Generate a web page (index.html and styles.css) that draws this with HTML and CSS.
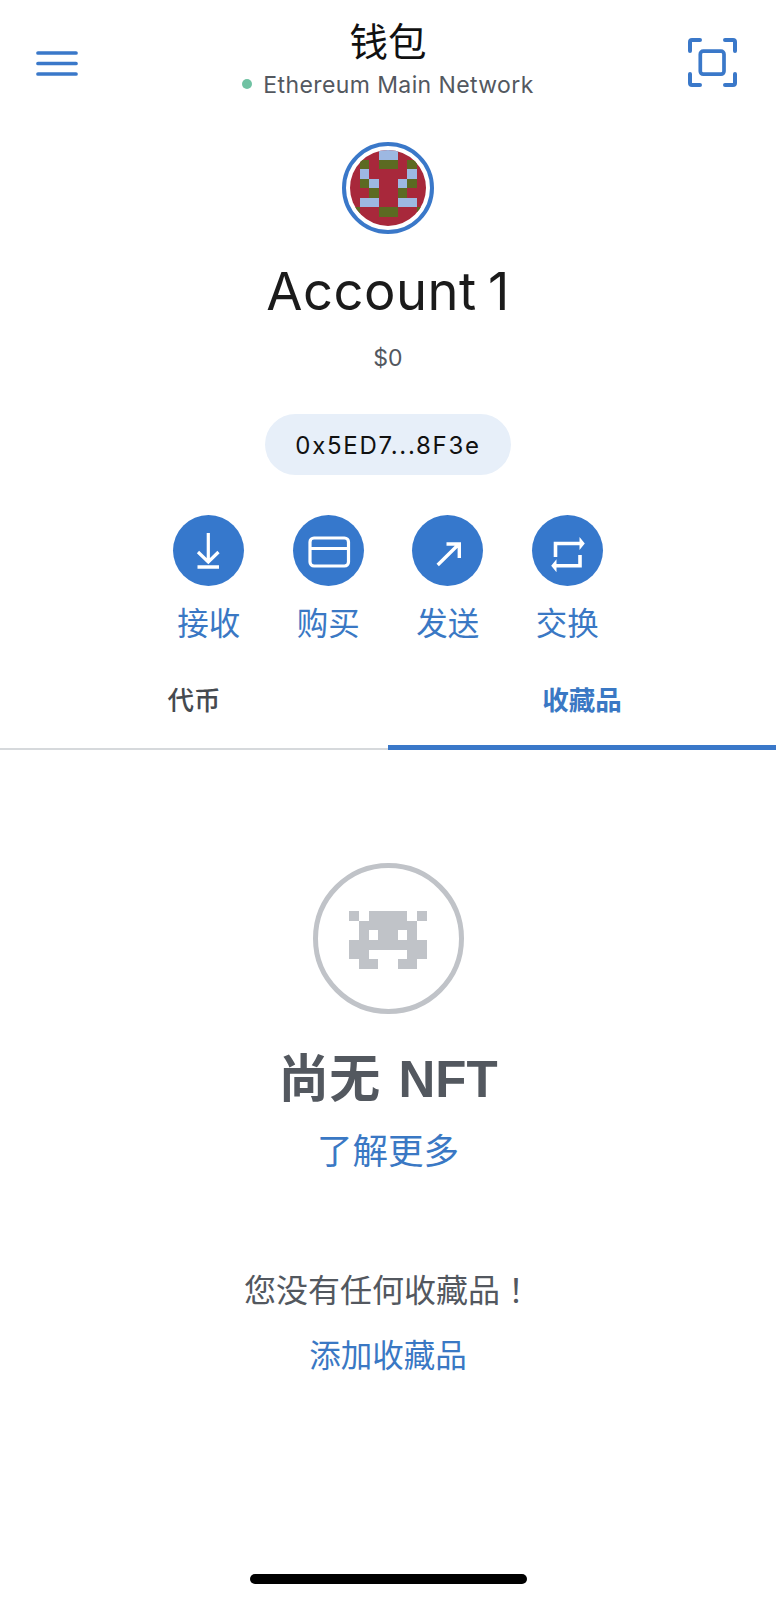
FILE: index.html
```html
<!DOCTYPE html>
<html lang="zh-CN">

<head>
    <meta charset="UTF-8">
    <meta name="viewport" content="width=device-width, initial-scale=1.0">
    <link rel="stylesheet" href="styles.css">
    <title>钱包</title>
</head>

<body>
    <div class="page">
        <div class="topBar">
            <svg class="menuIcon" width="42" height="25" viewBox="0 0 42 25">
                <path d="M2 2H40M2 12.5H40M2 23H40" stroke="#3a78c9" stroke-width="3.7" stroke-linecap="round" fill="none" />
            </svg>
            <div class="topTitle">
                <p class="walletName">钱包</p>
                <p class="networkName"><span class="networkDot"></span>Ethereum Main Network</p>
            </div>
            <svg class="scanIcon" width="49" height="49" viewBox="0 0 49 49" fill="none" stroke="#3a78c9" stroke-width="4" stroke-linecap="round" stroke-linejoin="round">
                <path d="M2 13V4Q2 2 4 2H12M37 2H45Q47 2 47 4V13M47 36V45Q47 47 45 47H37M12 47H4Q2 47 2 45V36" />
                <rect x="12.3" y="13.2" width="23.7" height="23" rx="3" stroke-width="3.7" />
            </svg>
        </div>

        <div class="account">
            <div class="avatar">
                <svg width="76" height="76" viewBox="0 0 8 8" shape-rendering="crispEdges">
                    <rect width="8" height="8" fill="#a8283b" />
                    <g fill="#9db8e2">
                        <rect x="3" y="0" width="2" height="1" />
                        <rect x="1" y="2" width="1" height="1" />
                        <rect x="6" y="2" width="1" height="1" />
                        <rect x="2" y="3" width="1" height="1" />
                        <rect x="5" y="3" width="1" height="1" />
                        <rect x="1" y="5" width="2" height="1" />
                        <rect x="5" y="5" width="2" height="1" />
                    </g>
                    <g fill="#5c6a22">
                        <rect x="1" y="1" width="1" height="1" />
                        <rect x="3" y="1" width="2" height="1" />
                        <rect x="6" y="1" width="1" height="1" />
                        <rect x="1" y="3" width="1" height="1" />
                        <rect x="6" y="3" width="1" height="1" />
                        <rect x="2" y="4" width="1" height="1" />
                        <rect x="5" y="4" width="1" height="1" />
                        <rect x="3" y="6" width="2" height="1" />
                        <rect x="0" y="6" width="1" height="1" />
                        <rect x="7" y="6" width="1" height="1" />
                    </g>
                </svg>
            </div>
            <h1 class="accountName">Account 1</h1>
            <p class="balance">$0</p>
            <div class="addressPill">0x5ED7...8F3e</div>
        </div>

        <div class="actions">
            <div class="action">
                <span class="actionCircle">
                    <svg width="71" height="71" viewBox="0 0 71 71" fill="none" stroke="#fff" stroke-width="3.2">
                        <path d="M35.3 18V47M25 37L35.3 47L45.5 37" />
                        <path d="M24.5 52H46" stroke-width="3.5" />
                    </svg>
                </span>
                <span class="actionLabel">接收</span>
            </div>
            <div class="action">
                <span class="actionCircle">
                    <svg width="71" height="71" viewBox="0 0 71 71" fill="none" stroke="#fff" stroke-width="3.2">
                        <rect x="17" y="23" width="38.5" height="28" rx="4" />
                        <path d="M17 33.5H55.5" />
                    </svg>
                </span>
                <span class="actionLabel">购买</span>
            </div>
            <div class="action">
                <span class="actionCircle">
                    <svg width="71" height="71" viewBox="0 0 71 71" fill="none" stroke="#fff" stroke-width="3.4">
                        <path d="M25.7 50L47 29M34.5 29H47.3V43" />
                    </svg>
                </span>
                <span class="actionLabel">发送</span>
            </div>
            <div class="action">
                <span class="actionCircle">
                    <svg width="71" height="71" viewBox="0 0 71 71" fill="none" stroke="#fff" stroke-width="3.6">
                        <path d="M23.5 42V28.5H48M48 40V50.7H24" />
                        <path d="M47.5 22L52.8 28.5L47.5 35ZM24.5 44.2L19.2 50.7L24.5 57.2Z" fill="#fff" stroke="none" />
                    </svg>
                </span>
                <span class="actionLabel">交换</span>
            </div>
        </div>

        <div class="tabs">
            <div class="tab">代币</div>
            <div class="tab tabActive">收藏品</div>
        </div>

        <div class="emptyState">
            <div class="nftCircle">
                <svg width="78" height="58" viewBox="0 0 8 6" fill="#c0c3c8" shape-rendering="crispEdges">
                    <path d="M0 0H1V1H0ZM2 0H6V1H2ZM7 0H8V1H7Z" />
                    <path d="M1 1H7V2H1Z" />
                    <path d="M1 2H2V3H1ZM3 2H5V3H3ZM6 2H7V3H6Z" />
                    <path d="M0 3H8V4H0Z" />
                    <path d="M0 4H2V5H0ZM6 4H8V5H6Z" />
                    <path d="M1 5H3V6H1ZM5 5H7V6H5Z" />
                </svg>
            </div>
            <h2 class="emptyTitle">尚无 NFT</h2>
            <a class="learnMore">了解更多</a>
            <p class="emptyText">您没有任何收藏品<span class="fullStop">！</span></p>
            <a class="addLink">添加收藏品</a>
        </div>

        <div class="homeBar"></div>
    </div>
</body>

</html>
```

FILE: styles.css
```css
* {
    box-sizing: border-box;
}

body {
    background-color: #fff;
    margin: 0;
    padding: 0;
    font-family: "Inter", "Noto Sans CJK SC", sans-serif;
}

p,
h1,
h2 {
    margin: 0;
    font-weight: normal;
}

.page {
    display: flex;
    flex-direction: column;
    height: 1600px;
}

.topBar {
    display: grid;
    grid-template-columns: 1fr auto 1fr;
    height: 142px;
    padding: 0 36px;
}

.menuIcon {
    margin-top: 51px;
}

.scanIcon {
    justify-self: end;
    margin-top: 38px;
    margin-right: 3px;
}

.topTitle {
    display: flex;
    flex-direction: column;
    align-items: center;
    padding-top: 14px;
}

.walletName {
    font-size: 38.5px;
    line-height: 57px;
    color: #111;
}

.networkName {
    display: flex;
    align-items: center;
    font-size: 23px;
    line-height: 28px;
    letter-spacing: 0.4px;
    color: #53585f;
}

.networkDot {
    width: 10px;
    height: 10px;
    margin-right: 11px;
    margin-bottom: 3px;
    border-radius: 50%;
    background-color: #70c2a3;
}

.account {
    display: flex;
    flex-direction: column;
    align-items: center;
}

.avatar {
    display: flex;
    align-items: center;
    justify-content: center;
    width: 92px;
    height: 92px;
    border: 4px solid #3a78c9;
    border-radius: 50%;
}

.avatar svg {
    border-radius: 50%;
}

.accountName {
    margin-top: 23px;
    font-size: 52.5px;
    font-weight: 400;
    line-height: 68px;
    letter-spacing: 0.5px;
    word-spacing: -4px;
    color: #1b1b1b;
}

.balance {
    margin-top: 18px;
    font-size: 23px;
    line-height: 30px;
    color: #53585f;
}

.addressPill {
    width: 246px;
    height: 61px;
    margin-top: 41px;
    border-radius: 31px;
    background-color: #e7eff9;
    font-size: 24px;
    line-height: 63px;
    letter-spacing: 1.7px;
    text-align: center;
    color: #111;
}

.actions {
    display: flex;
    justify-content: center;
    gap: 48.5px;
    margin-top: 40px;
}

.action {
    display: flex;
    flex-direction: column;
    align-items: center;
    width: 71px;
}

.actionCircle {
    width: 71px;
    height: 71px;
    border-radius: 50%;
    background-color: #3678cc;
}

.actionCircle svg {
    display: block;
}

.actionLabel {
    margin-top: 16px;
    font-size: 31.5px;
    line-height: 44px;
    color: #3a78c4;
}

.tabs {
    display: flex;
    height: 98px;
    margin-top: 6px;
}

.tab {
    flex: 1;
    padding-top: 29px;
    border-bottom: 2px solid #d6d9dc;
    font-size: 26.5px;
    font-weight: 500;
    line-height: 38px;
    text-align: center;
    color: #454a50;
}

.tabActive {
    border-bottom: 5px solid #3a78c9;
    color: #3a78c4;
    font-weight: 700;
}

.emptyState {
    display: flex;
    flex-direction: column;
    align-items: center;
}

.nftCircle {
    display: flex;
    align-items: center;
    justify-content: center;
    width: 151px;
    height: 151px;
    margin-top: 113px;
    padding-top: 2px;
    border: 5px solid #c0c3c8;
    border-radius: 50%;
}

.emptyTitle {
    margin-top: 30px;
    font-family: "Liberation Sans", "Noto Sans CJK SC", sans-serif;
    font-size: 51px;
    font-weight: 700;
    line-height: 72px;
    word-spacing: 4px;
    color: #53585f;
}

.learnMore {
    margin-top: 11px;
    font-size: 35.5px;
    line-height: 50px;
    color: #3a78c4;
}

.emptyText {
    margin-top: 92px;
    font-size: 32px;
    line-height: 44px;
    color: #53585f;
}

.fullStop {
    display: inline-block;
    width: 1em;
    padding-left: 0.25em;
}

.addLink {
    margin-top: 21px;
    font-size: 31.5px;
    line-height: 44px;
    color: #3a78c4;
}

.homeBar {
    width: 277px;
    height: 10px;
    margin: auto auto 16px;
    border-radius: 5px;
    background-color: #000;
}
```
